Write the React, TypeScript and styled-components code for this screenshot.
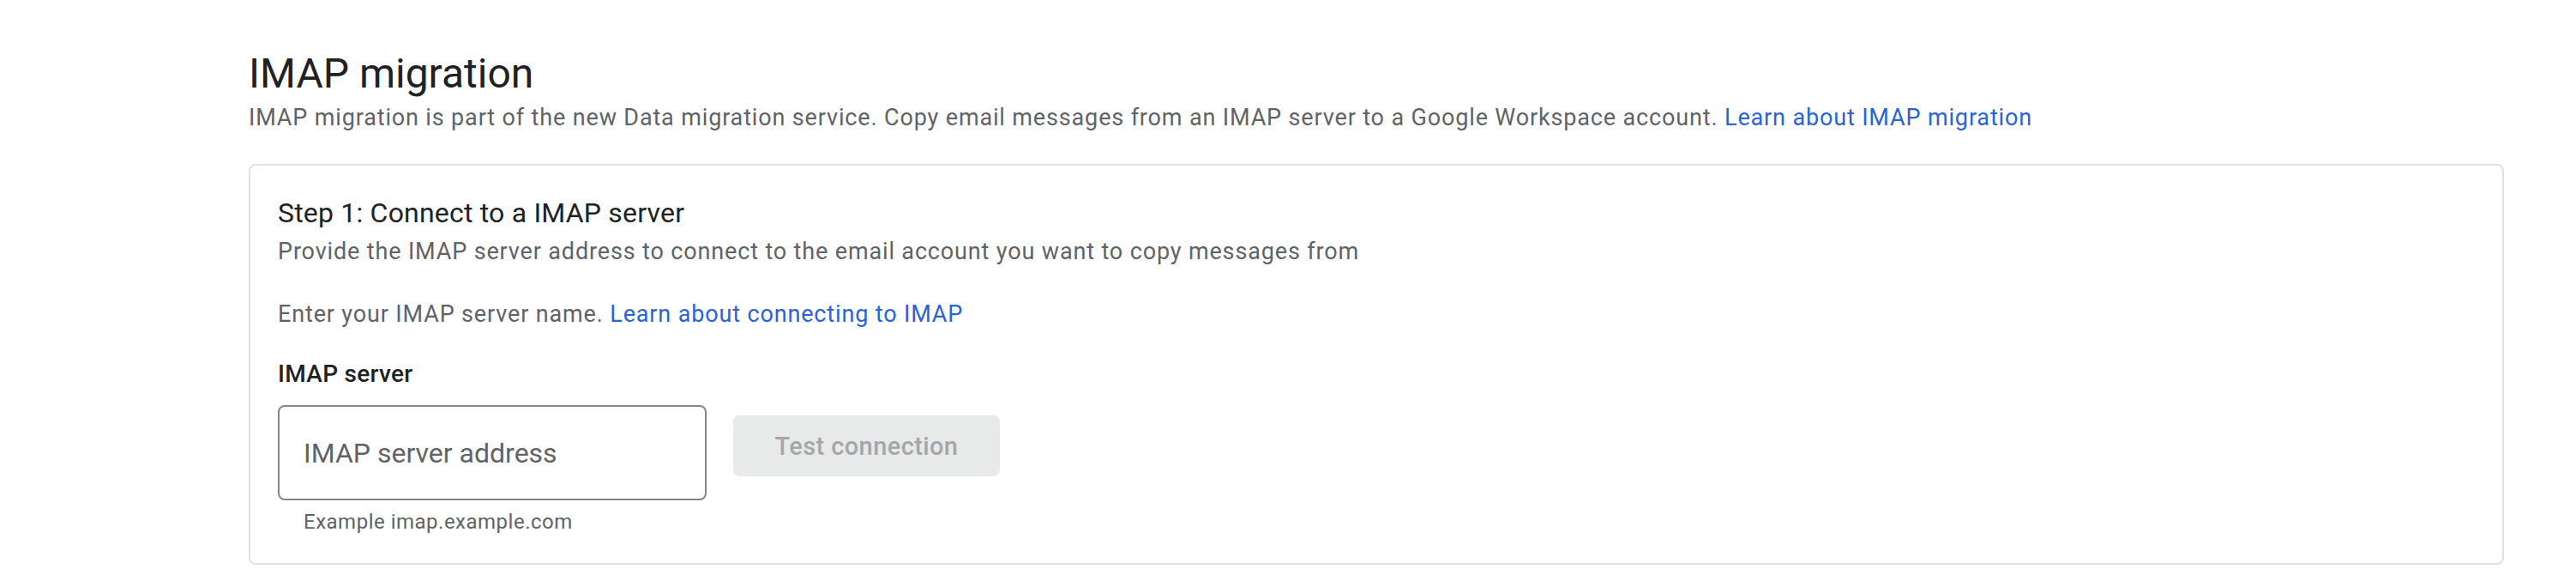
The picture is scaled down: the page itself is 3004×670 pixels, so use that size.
import styled, { createGlobalStyle } from 'styled-components';

const GlobalStyle = createGlobalStyle`
  body {
    margin: 0;
    background: #ffffff;
    font-family: Roboto, 'Liberation Sans', Arial, sans-serif;
  }
`

const Page = styled.div`
  padding: 58px 0 0 290px;
  width: 2630px;
`

const Title = styled.h1`
  margin: 0;
  font-size: 48px;
  line-height: 56px;
  font-weight: 400;
  color: #202124;
`

const Subtitle = styled.p`
  margin: 7px 0 0;
  font-size: 27px;
  line-height: 32px;
  color: #5f6368;
  letter-spacing: 0.85px;
`

const Link = styled.a`
  color: #2a63d4;
  text-decoration: none;
  cursor: pointer;
`

const Card = styled.section`
  margin-top: 38px;
  border: 2px solid #dfe1e4;
  border-radius: 8px;
  padding: 37px 32px 34px;
`

const StepTitle = styled.h2`
  margin: 0;
  font-size: 32px;
  line-height: 36px;
  font-weight: 400;
  color: #202124;
  letter-spacing: 0.2px;
`

const Text = styled.p<{ $gap: number }>`
  margin: ${p => p.$gap}px 0 0;
  font-size: 27px;
  line-height: 32px;
  color: #5f6368;
  letter-spacing: 0.85px;
`

const Label = styled.div`
  margin-top: 38px;
  font-size: 28px;
  line-height: 32px;
  font-weight: 500;
  color: #202124;
  letter-spacing: 0.3px;
`

const FieldRow = styled.div`
  display: flex;
  align-items: flex-start;
  gap: 31px;
  margin-top: 20px;
`

const Field = styled.div`
  display: flex;
  flex-direction: column;
`

const Input = styled.input`
  box-sizing: border-box;
  width: 500px;
  height: 111px;
  padding: 0 28px;
  border: 2px solid #80868b;
  border-radius: 8px;
  font-family: inherit;
  font-size: 32px;
  color: #202124;
  outline: none;

  &::placeholder {
    color: #5f6368;
  }
`

const Hint = styled.div`
  margin-top: 11px;
  padding-left: 30px;
  font-size: 24px;
  line-height: 28px;
  color: #5f6368;
  letter-spacing: 0.5px;
`

const Button = styled.button`
  margin-top: 12px;
  width: 311px;
  height: 71px;
  border: none;
  border-radius: 8px;
  background: #e8eaea;
  color: #a4a7aa;
  font-family: inherit;
  font-size: 29px;
  font-weight: 500;
  letter-spacing: 0.4px;
`

const App = () => {
  return (
    <Page>
      <GlobalStyle />
      <Title>IMAP migration</Title>
      <Subtitle>
        IMAP migration is part of the new Data migration service. Copy email messages from an IMAP server to a Google Workspace account. <Link>Learn about IMAP migration</Link>
      </Subtitle>
      <Card>
        <StepTitle>Step 1: Connect to a IMAP server</StepTitle>
        <Text $gap={11}>Provide the IMAP server address to connect to the email account you want to copy messages from</Text>
        <Text $gap={41}>
          Enter your IMAP server name. <Link>Learn about connecting to IMAP</Link>
        </Text>
        <Label>IMAP server</Label>
        <FieldRow>
          <Field>
            <Input placeholder="IMAP server address" />
            <Hint>Example imap.example.com</Hint>
          </Field>
          <Button disabled>Test connection</Button>
        </FieldRow>
      </Card>
    </Page>
  );
}

export default App
